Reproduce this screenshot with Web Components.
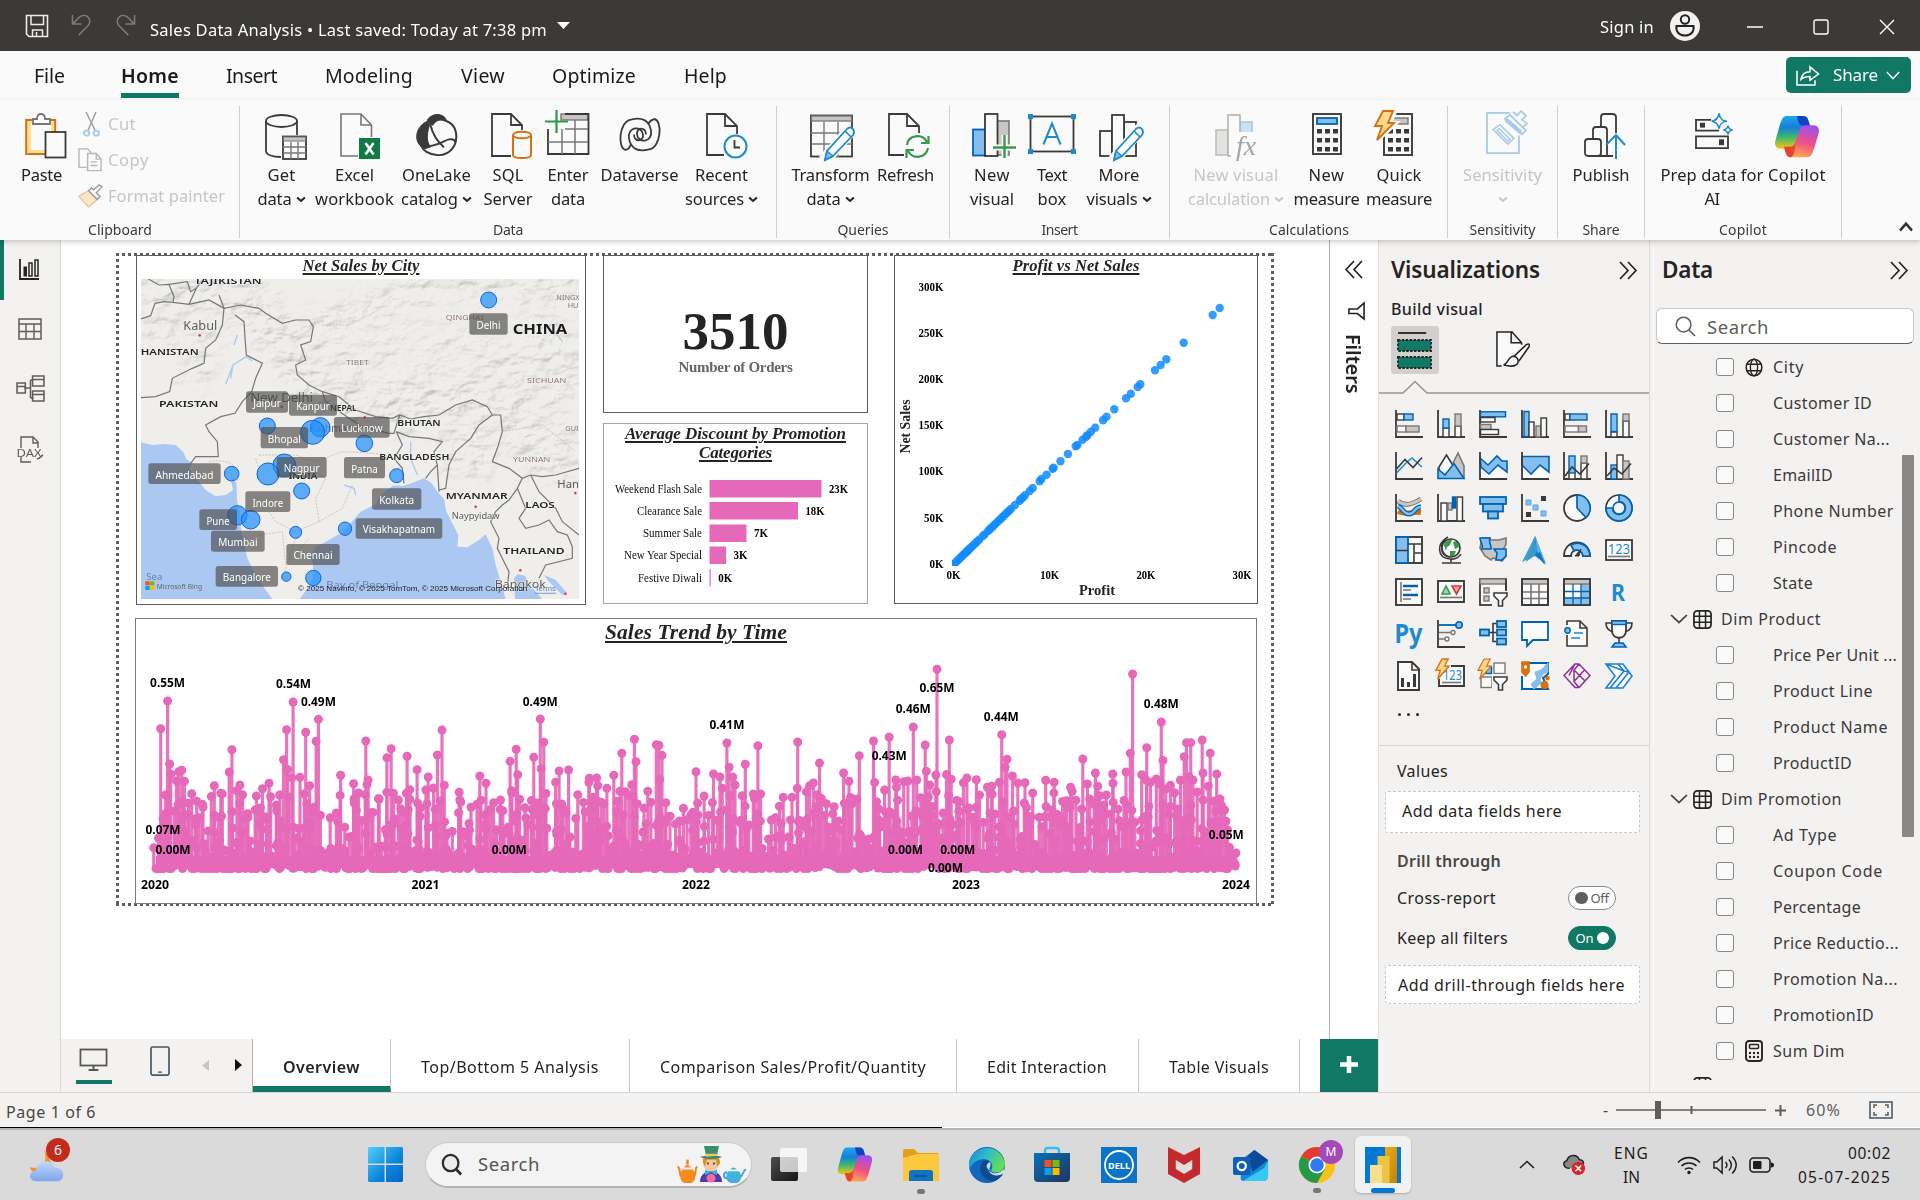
<!DOCTYPE html>
<html lang="en">
<head>
<meta charset="utf-8">
<title>Sales Data Analysis</title>
<style>
html,body{margin:0;padding:0;width:1920px;height:1200px;overflow:hidden;background:#fff}
body{font-family:"Noto Sans","Open Sans",sans-serif;color:#252423}
</style>
</head>
<body>
<bi-desktop></bi-desktop>
<script>
const K='#3b3a39',B='#0063b1',LB='#83beec',G='#797775',LG='#c8c6c4',W='#fafafa',BL='#1e8bcd',OR='#d86f10',GN='#379a4b',TEAL='#117865';
const R=(x,y,w,h,f='none',s=K,sw=1.4)=>`<rect x="${x}" y="${y}" width="${w}" height="${h}" fill="${f}" stroke="${s}" stroke-width="${sw}"/>`;
const P=(d,s=K,f='none',sw=1.6)=>`<path d="${d}" stroke="${s}" fill="${f}" stroke-width="${sw}"/>`;
const C=(x,y,r,f='none',s=K,sw=1.4)=>`<circle cx="${x}" cy="${y}" r="${r}" fill="${f}" stroke="${s}" stroke-width="${sw}"/>`;
const AX=P('M1 0V27H28',K,'none',1.8);
const ST=(x,y,t,o={})=>`<text x="${x}" y="${y}" font-size="${o.s||12}" text-anchor="${o.a||'middle'}" dominant-baseline="central" fill="${o.f||'#000'}" font-weight="${o.b||400}" font-family='${o.ff||'"Noto Sans",sans-serif'}' ${o.w?`textLength="${o.w}" lengthAdjust="spacingAndGlyphs"`:''} ${o.x||''}>${t}</text>`;
const PENCIL=P('M29 52L31 43 51 21 Q54 18 57 21 Q59 24 57 27L37 48Z',BL,'#fff',1.8)+P('M29 52L31 43 37 48Z',BL,'#83beec',1.5)+P('M49 23L55 29',BL);
const LOOP=`<defs><linearGradient id="ca" x1="0" y1="0" x2="0" y2="1"><stop offset="0" stop-color="#1ea7f0"/><stop offset=".35" stop-color="#1380d8"/><stop offset=".65" stop-color="#3fb86c"/><stop offset="1" stop-color="#f6c80e"/></linearGradient><linearGradient id="cb" x1=".6" y1="0" x2=".3" y2="1"><stop offset="0" stop-color="#a050ea"/><stop offset=".5" stop-color="#ee4f87"/><stop offset="1" stop-color="#fdae50"/></linearGradient></defs>
<path d="M13 2H29C33 2 34 5 35 9L36 13H32C28 13 27 16 26 19L22 33C21 37 18 37 15 37H7C1 37 0 32 2 26L6 11C8 5 9 2 13 2Z" fill="url(#ca)"/><path d="M23 2H29C33 2 34 5 35 9L36 13H31C27 13 25 11 24 7Z" fill="#1143c4"/><path d="M33 46H17C13 46 12 43 11 39L10 35H15C20 35 21 31 22 28L26 16C27 12 30 12 33 12H39C45 12 46 17 44 23L40 37C38 43 37 46 33 46Z" fill="url(#cb)"/><path d="M10 35H15C20 35 21 33 22 29L20 41C19 45 18 46 16 46 13 46 12 43 11 39Z" fill="#e8452c"/>`;
const BOLT=P('M8 0H15L11 8H16L3 23 6 13H1Z',OR,'#fcd98a',1.4);
const FUN=P('M15 15H28V18L23.500 22.500V28H19.500V22.500L15 18Z',K,W,1.6);

/* name : [viewBox, markup] */
const ICONS={
 save:['0 0 24 24',P('M1.500 1.500H22.500V22.500H4L1.500 20Z','#ececec','none',1.6)+P('M6 2V10.500H18.500V2M7.500 22V16H17.500V22M11.500 18V22','#ececec','none',1.5)],
 undo:['0 0 22 24',P('M1.500 1V10.500H11M2 10L8 4C16 -3 24 7 17 13L8 22','#7d7b79','none',1.6)],
 redo:['0 0 22 24',P('M20.500 1V10.500H11M20 10L14 4C6 -3 -2 7 5 13L14 22','#7d7b79','none',1.6)],
 caret:['0 0 12 7','<path d="M0 0H12L6 7Z" fill="#fff"/>'],
 user:['0 0 30 30',C(15,15,15,'#f3f2f1','none',0)+C(15,8.500,4.2,'none','#222',2)+P('M6.500 15H23.500C24.500 21 20.500 24.500 15 24.500S5.500 21 6.500 15Z','#222','none',2)],
 min:['0 0 16 16',P('M0 8H16','#fff','none',1.5)],
 max:['0 0 16 16','<rect x="1" y="1" width="14" height="14" rx="2" fill="none" stroke="#fff" stroke-width="1.4"/>'],
 close:['0 0 16 16',P('M1 1L15 15M15 1L1 15','#fff','none',1.4)],
 share:['0 0 24 22',P('M1 6V21H19V16M5 15C6 9 10 7 14 7V2L22.500 9.500 14 16V12C10 12 7 13 5 15Z','#fff','none',1.5)],
 chev:['0 0 16 10',P('M1 1L8 8.500 15 1','currentColor','none',1.7)],
 chevUp:['0 0 14 8',P('M1 7.500L7 1.500 13 7.500','currentColor','none',2.4)],
 trayUp:['0 0 16 9',P('M1 8L8 1.500 15 8','#222','none',1.6)],
 sm:['0 0 9 7',P('M1 1.500L4.500 5 8 1.500','currentColor','none',1.8)],
 paste:['0 0 42 46',R(1.200,7,29,34,'#fcdf97',OR,2)+R(6,10,20,27,W,'none',0)+P('M8 6H12C12 2 14 1 16 1S20 2 20 6H25V11H8Z',G,W,1.8)+R(20.500,19,20,25.500,W,K,1.8)],
 cut:['0 0 17 26',P('M3 0L12 19M13 0L5 19','#a19f9d','none',1.5)+C(3.500,22,2.700,'none','#a3cbe6',1.8)+C(13.300,22,2.700,'none','#a3cbe6',1.8)],
 copy:['0 0 26 26',P('M9 21H1V1H10L13 4V6','#bab8b6','none',1.5)+P('M10 6H19L24 12V24.500H10ZM19 6V12H24M13 15H20M13 19H20','#bab8b6',W,1.5)],
 brush:['0 0 26 24',P('M11 6L20 15 11 23 1 12Z','#efc49a','#fbe7c8',1.5)+P('M11 6L20 15 23 12 19 8 25 2 22 0 16 5 14 3Z','#a19f9d',W,1.5)],
 getdata:['0 0 42 46',`<ellipse cx="16.500" cy="7" rx="15.500" ry="6" fill="none" stroke="${K}" stroke-width="1.8"/>`+P('M1 7V37C1 41 8 43 16 43M32 7V21',K,'none',1.8)+R(18,22.500,23,22.500,W,K,1.8)+R(18.500,23,22,4,LG,G,1)+P('M18 33H41M18 39H41M26 28V45M33 28V45',G,'none',1.4)],
 excel:['0 0 40 46',P('M18 43H1V1H21L31.500 12V24M21 1V12H31.500',G,'none',1.6)+'<rect x="19" y="25" width="21" height="21" fill="#107c41"/>'+P('M25.500 30L33.500 41.500M33.500 30L25.500 41.500','#fff','none',2.6)],
 onelake:['0 0 42 44',`<path d="M11 6C16 -2 28 -2 31 7 25 4 20 7 17 12 13 10 11 9 11 6Z" fill="${K}"/><path d="M11 7C-3 15 -3 31 9 36L15 34C10 27 12 18 14 11Z" fill="${K}"/>`+P('M15 9C23 2 38 7 40 19 42 32 34 43 21 42 12 41 7 37 5 32M14 10C17 22 22 29 28 34M6 34C23 33 28 27 33 26S40 28 39 30',K,'none',2)],
 sql:['0 0 41 46',P('M20 43H1V1H20L31 12V17M20 1V12H31',K,'none',1.8)+P('M22 22V42C22 46 40 46 40 42V22',OR,W,2)+`<ellipse cx="31" cy="22" rx="9" ry="3.300" fill="${W}" stroke="${OR}" stroke-width="2"/>`],
 enter:['0 0 44 46',R(16,4,27,6,LG,G,1.4)+P('M20 4H43.500V44H3V19',K,'none',1.8)+P('M3 32H43M20 19H43M17 19V44M30 10V44',G,'none',1.5)+P('M0 11.500H23M11.500 0V23','#2e9a4b','none',2.2)],
 dataverse:['0 0 42 32',P('M7 31C-2 30 0 3 12 1.500 23 -1 30 2 32 12 34 24 19 25 18 16 17 9 27 8 27 16M35 1C44 2 42 29 30 30.500 19 33 12 30 10 20 8 8 23 7 24 16 25 23 15 24 15 16M7 31C11 30 11 27 12 25M35 1C31 2 30 4 29 6',K,'none',1.8)],
 recent:['0 0 41 46',P('M18 42H1V1H19L31 13V21M19 1V13H31',K,'none',1.8)+C(29.500,33.500,11,W,BL,2)+P('M28.500 27V34.500H34',K,'none',1.8)],
 transform:['0 0 46 46',R(1,1.500,41,41,W,K,1.8)+R(1.500,2,40,5,LG,G,1.3)+P('M1 19H42M1 30H42M14 8V43M28 8V43',G,'none',1.4)+`<g transform="translate(-14 -6)"><path d="M28 53L56 20" stroke="#fafafa" stroke-width="13"/>${PENCIL}</g>`],
 refresh:['0 0 42 46',P('M16 42H1V1H19L31 13V20M19 1V13H31',K,'none',1.8)+P('M19 32C20 22 34 20 39 29M40.500 23V30H33M40 35C38 45 25 47 20 38M18.500 45V37H26',GN,'none',2.2)],
 newvisual:['0 0 44 46',R(1,16.500,12,26,LB,B,1.8)+R(25,8,12,34,LG,G,1.6)+R(13,1,12.500,42,W,K,1.8)+P('M21 34.500H44M32.500 22V46',W,'none',6)+P('M21 34.500H44M32.500 22V45','#379a4b','none',2.4)],
 textbox:['0 0 48 40',R(2.500,2.500,43,35,W,K,1.8)+[[0,0],[43,0],[0,35],[43,35]].map(a=>`<rect x="${a[0]}" y="${a[1]}" width="5" height="5" fill="${BL}"/>`).join('')+P('M15.500 30.500L24 9.500 32.500 30.500M18.500 23H29.500',BL,'none',2)],
 morevisuals:['0 0 46 46',R(1,17,12,25,W,K,1.8)+R(25,8,12,34,W,K,1.8)+R(13,1,12,41,W,K,1.8)+`<g transform="translate(-14 -6)"><path d="M28 53L56 20" stroke="#fafafa" stroke-width="12"/>${PENCIL}</g>`],
 newcalc:['0 0 44 46','<g>'+R(1,16,12,25,'#e3e2e1','#c0bfbd',1.6)+R(25,8,12,18,'#cbe2f3','#a9cbe3',1.6)+R(13,1,12,41,W,'#b5b3b1',1.6)+'<path d="M24 18H44V46H16V34H24Z" fill="#fafafa"/>'+ST(31,31,'fx',{s:28,ff:'"Liberation Serif"',f:'#a7a5a3',x:'font-style="italic"'})+'</g>'],
 measure:['0 0 30 42',R(1,1,28,40,W,K,1.9)+R(5,5,20,6,LB,B,1.8)+[0,1,2].map(r=>[0,1,2].map(c=>`<rect x="${5+c*8}" y="${16+r*9}" width="5" height="4.500" fill="${K}"/>`).join('')).join('')],
 quick:['0 0 40 46',`<g transform="translate(9 3)">`+R(1,1,28,41,W,K,1.9)+R(5,5,20,6,LG,G,1.4)+[0,1,2].map(r=>[0,1,2].map(c=>`<rect x="${5+c*8}" y="${16+r*9}" width="5" height="4.500" fill="${K}"/>`).join('')).join('')+'</g>'+P('M8 0H22L16 13H22L2 32 7 17H0Z',W,W,4)+P('M9 1H19L14 13H20L3 30 8 16H1Z',OR,'#fcd98a',1.9)],
 sens:['0 0 42 46',P('M24 3H1V44H33V26','#a3cbe6','none',1.7)+P('M7 20L14 15 28 29 22 35ZM11 21L13 19 24 30 22 32Z','#a3cbe6','none',1.5)+P('M19 9L24 5 40 21 36 25ZM19 9L33 22M27 2L31 6 35 1 40 6 36 10 41 14 36 18','#a3cbe6',W,1.7)+P('M20 10L35 23','#a3cbe6','none',4)],
 publish:['0 0 42 46',`<rect x="1" y="26" width="16" height="17" rx="3" fill="none" stroke="${K}" stroke-width="1.8"/>`+P('M9 26V17Q9 14 12 14H20Q23 14 23 17V43H14M17 14V4Q17 1 20 1H28Q32 1 32 4V20M23 43H29',K,'none',1.8)+P('M32 46V22M22 32L32 22 41 32',BL,'none',2)],
 prep:['0 0 38 38',P('M16 7H1V18H24M1 24H33V36H1Z',K,'none',1.8)+'<rect x="5" y="10" width="5" height="5" fill="#3b3a39"/><rect x="24" y="27" width="5" height="6" fill="#3b3a39"/>'+P('M24 0.500C25 6 27 8 32 8.500 27 9 25 11 24 16 23 11 21 9 16.500 8.500 21 8 23 6 24 0.500ZM33 13C33.500 16 35 17 37.500 17.500 35 18 33.500 19 33 22 32.500 19 31 18 28.500 17.500 31 17 32.500 16 33 13Z',BL,W,1.6)],
 copilot:['0 0 46 48',LOOP],
 report:['0 0 24 24',P('M2 2V22H21','#252423','none',1.8)+R(6,10,2.500,9,'#252423','#252423',1)+R(11,6,3,13,'none','#252423',1.5)+R(17,3,3,16,'none','#252423',1.5)],
 table:['0 0 24 22',R(1,1,22,20,'none','#605e5c',1.5)+P('M1 6H23M1 13.500H23M8 6V21M16 6V21','#605e5c','none',1.4)],
 model:['0 0 28 28',P('M8 13H14M14 5V23M14 5H17M14 23H17','#605e5c','none',1.5)+R(1,8,8,10,'none','#605e5c',1.5)+R(16,1,11,10,'none','#605e5c',1.5)+R(16,16,11,10,'none','#605e5c',1.5)+P('M16 4.500H27M16 19.500H27M1 11.500H9','#605e5c','none',1.5)],
 dax:['0 0 28 28',P('M5 12V1H17L22 6V12M17 1V7H22M5 21V26H15','#605e5c','none',1.4)+ST(13,17,'DAX',{s:10.500,f:'#605e5c',w:25})+P('M21 23C25 22 25 20 27 19','#605e5c','none',1.4)],
 dl:['0 0 20 20',P('M10 1L2 10 10 19M18 1L10 10 18 19','currentColor','none',1.7)],
 dr:['0 0 20 20',P('M2 1L10 10 2 19M10 1L18 10 10 19','currentColor','none',1.7)],
 funnel:['0 0 18 18',P('M17 1V17L10 11.500H1V7H10Z','#252423','none',1.7)],
 build:['0 0 38 38',P('M1 2H30','#252423','none',1.8)+`<rect x="1" y="9" width="34" height="11" fill="${TEAL}" stroke="#252423" stroke-width="1.800" stroke-dasharray="2.500 1.500"/><rect x="1" y="26" width="34" height="11" fill="${TEAL}" stroke="#252423" stroke-width="1.800" stroke-dasharray="2.500 1.500"/>`],
 format:['0 0 38 38',P('M6 36H1V1H17L27 12V14M16 1V12H27','#252423',W,1.6)+P('M19 26L32 14 Q36 12 35 16L24 31','#252423',W,1.6)+P('M8 35C13 34 12 26 19 26 26 28 25 37 14 36Z','#252423',W,1.6)],
 search:['0 0 22 22',C(9,9,7.700,'none','currentColor',1.6)+P('M14.500 14.500L21 21','currentColor','none',1.7)],
 globe:['0 0 20 20',C(10,10,8.700,'none','#252423',1.7)+'<ellipse cx="10" cy="10" rx="4" ry="8.700" fill="none" stroke="#252423" stroke-width="1.500"/>'+P('M2 6.500H18M2 13.500H18','#252423','none',1.5)],
 dim:['0 0 20 20','<rect x="1" y="1" width="18" height="18" rx="3.500" fill="none" stroke="#252423" stroke-width="1.800"/>'+P('M1 6.500H19M1 13H19M6.800 1V19M13.200 1V19','#252423','none',1.6)],
 calc:['0 0 18 22','<rect x="1" y="1" width="16" height="20" rx="3" fill="none" stroke="#252423" stroke-width="1.900"/><rect x="4.500" y="4.500" width="9" height="4" rx="1" fill="none" stroke="#252423" stroke-width="1.500"/>'+[5,9,13].map(x=>C(x,13,1.200,'#252423','none',0)+C(x,17,1.200,'#252423','none',0)).join('')],
 desktop:['0 0 30 24',R(1.500,1.500,27,16,'none','#555',1.8)+P('M15 17V22M10 22H20','#555','none',2)],
 phone:['0 0 20 32','<rect x="1" y="1" width="18" height="29" rx="1.500" fill="none" stroke="#4a5866" stroke-width="1.700"/>'+P('M8 27H12','#555','none',1.4)],
 fit:['0 0 24 18',R(1,1,22,16,'none','#4d5b68',1.6)+P('M5 7V4H8M16 4H19V7M19 11V14H16M8 14H5V11','#605e5c','none',1.6)],
 /* taskbar */
 weather:['0 0 40 40','<defs><linearGradient id="wc" x1="0" y1="0" x2="0" y2="1"><stop offset="0" stop-color="#c2d8fb"/><stop offset="1" stop-color="#7fa5ec"/></linearGradient></defs><path d="M15 2C22 18 12 26 1 22 3 32 20 36 26 22Z" fill="#f0932a"/><path d="M8 37C-1 37 -1 26 7 26 9 16 23 11 27 23 38 22 39 37 30 37Z" fill="url(#wc)"/>'],
 start:['0 0 36 36','<defs><linearGradient id="st" x1="0" y1="0" x2="1" y2="1"><stop offset="0" stop-color="#4fd0fb"/><stop offset=".6" stop-color="#0c83d8"/><stop offset="1" stop-color="#0069c8"/></linearGradient></defs><path d="M1 0H17V17H0V1ZM18.500 0H35L36 1V17H18.500ZM0 18.500H17V36H1L0 35ZM18.500 18.500H36V35L35 36H18.500Z" fill="url(#st)"/>'],
 lens:['0 0 24 24',C(10.500,10.500,8.500,'#e8ecef','#2b2b2b',2.4)+P('M16.500 17L22 22.500','#2b2b2b','none',3)],
 hatter:['0 0 68 40','<path d="M4 25H15C19 31 17 38 13 39H7C2 38 1 31 4 25ZM6 23Q9.500 18 13 23Z" fill="#f58a1f"/><path d="M3 32C1 30 3 26 0 22M16 32C19 30 16 26 19 22" fill="none" stroke="#f1831f" stroke-width="2"/><path d="M9.500 15V20" stroke="#f1831f" stroke-width="2.500"/><path d="M50 27H61C65 32 63 38 59 39H53C48 38 47 32 50 27ZM52 25Q55.500 21 59 25Z" fill="#43b3de"/><path d="M62 33C66 31 64 27 68 25M49 34C45 34 45 28 49 28" fill="none" stroke="#3fa7d6" stroke-width="2"/><path d="M22 38C22 30 28 27 33 27S44 30 44 38Z" fill="#5437a8"/><circle cx="33" cy="19" r="8" fill="#f6c79b"/><path d="M25 18C24 11 28 12 33 13S42 10 42 19L39 22 38 15 29 15 27 22Z" fill="#df8e27"/><path d="M26 1H41L39 11 44 12C40 15 27 15 22 12L28 11Z" fill="#378f6b"/><path d="M27 9H39V11L28 12Z" fill="#f4c55b"/><path d="M30 18V20M36 18V20" stroke="#333" stroke-width="1.500"/><path d="M33 28L27 25V31ZM33 28L39 25V31Z" fill="#2bb5e8"/><circle cx="33" cy="34" r="4.500" fill="#f06aa4"/>'],
 taskview:['0 0 36 36','<defs><linearGradient id="tv" x1="0" y1="0" x2="1" y2="1"><stop offset="0" stop-color="#4c4c4c"/><stop offset="1" stop-color="#161616"/></linearGradient></defs><rect x="0" y="10" width="27" height="24" rx="2" fill="url(#tv)"/><rect x="9" y="1" width="27" height="24" rx="2" fill="#fff" opacity=".75"/>'],
 folder:['0 0 36 34','<path d="M0 3Q0 1 2 1H11L15 5H34Q36 5 36 8V31Q36 33 34 33H2Q0 33 0 31Z" fill="#e2a01b"/><path d="M0 10L14 6H36V31Q36 33 34 33H2Q0 33 0 31Z" fill="#fcc93c"/><path d="M6 33V25Q6 22 9 22H27Q30 22 30 25V33Z" fill="#1273c4"/><path d="M11 28H24" stroke="#0b4f93" stroke-width="1.500"/>'],
 edge:['0 0 36 36','<defs><linearGradient id="e1" x1="0" y1="0" x2="1" y2=".4"><stop offset="0" stop-color="#1b86d6"/><stop offset=".5" stop-color="#2bbccb"/><stop offset="1" stop-color="#62dc5a"/></linearGradient></defs><circle cx="18" cy="18" r="18" fill="#1167bd"/><path d="M0 16C2 -1 30 -7 36 16 36 26 26 27 22 24 25 19 23 13 15 12 8 12 2 17 0 23Z" fill="url(#e1)"/><path d="M14 14C8 22 12 34 26 34 30 32 33 29 34 27 28 30 18 28 17 20 17 16 20 15 21 15 19 13 16 13 14 14Z" fill="#124a92"/><path d="M21 15C17 17 16 21 22 24 18 20 23 21 21 15Z" fill="#dadada"/><path d="M35 26C30 30 22 29 20 24 26 29 32 25 35 22Z" fill="#dadada"/>'],
 store:['0 0 36 36','<defs><linearGradient id="so" x1="0" y1="0" x2="1" y2="1"><stop offset="0" stop-color="#0a71b8"/><stop offset="1" stop-color="#20345f"/></linearGradient></defs><path d="M11 9V4Q11 1 14 1H22Q25 1 25 4V9" fill="none" stroke="#37bdf2" stroke-width="2.400"/><path d="M0 6H36V31Q36 35 32 35H4Q0 35 0 31Z" fill="url(#so)"/><rect x="10.500" y="13" width="7" height="7" fill="#f25022"/><rect x="18.500" y="13" width="7" height="7" fill="#7fba00"/><rect x="10.500" y="21" width="7" height="7" fill="#00a4ef"/><rect x="18.500" y="21" width="7" height="7" fill="#ffb900"/>'],
 dell:['0 0 36 36','<rect width="36" height="36" fill="#0b74c9"/>'+C(18,18,14,'none','#fff',1.8)+ST(18,18,'DELL',{s:9.500,f:'#fff',b:700,w:22})],
 mcafee:['0 0 34 36','<path d="M0 0L16.500 8 33 0V27L16.500 36 0 27Z" fill="#c42a2c"/><path d="M8 13L16.500 18 25 13V22L16.500 27 8 22Z" fill="#dedede"/>'],
 outlook:['0 0 38 34','<path d="M8 12L22 2 36 12V28Q36 33 31 33H11Q7 33 8 28Z" fill="#1687d9"/><path d="M15 8L22 2 36 12 20 24Z" fill="#0b4a99"/><path d="M36 13V28Q36 33 31 33H10L32 20Z" fill="#36c9f4"/><rect x="0" y="9" width="18" height="18" rx="2" fill="#0f5fb8"/>'+C(9,18,4.200,'none','#fff',2.3)],
 chrome:['0 0 36 36','<circle cx="18" cy="18" r="18" fill="#fbc116"/><path d="M18 18L2.400 9A18 18 0 0 1 33.600 9Z" fill="#e33b2e"/><path d="M18 18L2.400 9A18 18 0 0 0 18 36L26 22Z" fill="#279847"/><circle cx="18" cy="18" r="8.500" fill="#fff"/><circle cx="18" cy="18" r="6.800" fill="#3079ee"/>'],
 powerbi:['0 0 36 36','<defs><linearGradient id="pb" x1="0" y1="0" x2="1" y2="1"><stop offset="0" stop-color="#e9ad12"/><stop offset="1" stop-color="#c58208"/></linearGradient></defs><rect width="36" height="36" fill="#0078d4"/><rect x="20" y="0" width="12" height="36" fill="url(#pb)"/><rect x="12.500" y="9" width="12" height="27" fill="#ecc344"/><rect x="5" y="18" width="12" height="18" fill="#f8e08a"/>'],
 cloudx:['0 0 26 24','<path d="M8 16C1 16 0 9 5 8 7 1 16 1 18 7 22 7 23 10 22 12" fill="#888" stroke="#222" stroke-width="1.600"/><circle cx="17" cy="16" r="7" fill="#d1272d"/><path d="M14 13L20 19M20 13L14 19" stroke="#fff" stroke-width="1.600"/>'],
 wifi:['0 0 24 20',P('M1 7.500C7 1 17 1 23 7.500M4.500 11C8.500 7 15.500 7 19.500 11M8 14.500C10 12.500 14 12.500 16 14.500','#1c1c1c','none',1.6)+C(12,17.500,1.700,'#1c1c1c','none',0)],
 sound:['0 0 26 20',P('M1 7H4L9.500 2V18L4 13H1ZM13 7C15 9 15 11 13 13M16.500 4.500C20 8 20 12 16.500 15.500M20 1.500C25.500 7 25.500 13 20 18.500','#1c1c1c','none',1.5)],
 battery:['0 0 26 18','<rect x="1" y="2" width="20" height="14" rx="3.500" fill="none" stroke="#1c1c1c" stroke-width="1.600"/><rect x="4" y="5" width="8.500" height="8" rx="1" fill="#1c1c1c"/><path d="M22 6.500Q25 6.500 25 9T22 11.500Z" fill="#1c1c1c"/>'],
};
const VIZ=[
 AX+R(2,4,7,6,W,K)+R(9,4,9,6,LB,B)+R(2,16,9,6,W,G)+R(11,16,13,6,LG,G),
 AX+R(6,18,6,9,W,K)+R(6,9,6,9,LB,B)+R(18,16,6,11,W,K)+R(18,4,6,12,LG,G),
 AX+R(1.500,1.800,25,5,LB,B)+R(1.500,7.500,14.500,4.500,W,K)+R(1.500,14.500,10.500,5,LG,G)+R(1.500,19.500,18,5,W,K),
 AX+R(3,1.500,5,25,LB,B)+R(8,12,5,15,W,K)+R(15,16,5,11,LG,G)+R(20,8,5.500,19,W,K),
 AX+R(2,4,5,6,W,K)+R(7,4,17,6,LB,B)+R(2,16,13.500,6,W,G)+R(15.500,16,8,6,LG,G),
 AX+R(6,22,6,5,W,K)+R(6,4,6,17.500,LB,B)+R(18,11,6,16,W,K)+R(18,4,6,7,LG,G),
 AX+P('M1.500 21L12 10 17 6 27 15',BL)+P('M1.500 17L10 7.500 18 15.500 27 5.500'),
 P('M2 26V15L9.500 3 20 20',K,W)+P('M15 13L21 1 27 14V26.500',G,LG)+P('M1 26.500V17L8 23 17 11.500 27 26.500Z',B,LB),
 P('M1 26V14L9 22 19 13 27 20V26Z','none',W)+P('M1 6L9 13 18 4 23 9H28V20L19 13 10 22 2 15Z',B,LB)+AX,
 P('M1 26V14L9 22 19 13 27 20V26Z','none',W)+P('M1 4.500H28V20L19 13 10 22 1 13Z',B,LB)+AX,
 AX+R(6,20,6,7,W,K)+R(6,4,6,17,LB,B)+R(18,11,6,16,W,K)+R(18,4,6,7,LG,G)+P('M2 24L9 15 17 22 26 11.500'),
 AX+R(6,13,6,14,LB,B)+R(12,3,6,24,W,K)+R(18,9,6,18,LG,G)+P('M2 24L9 16 17 22 26 11.500'),
 P('M3 7C9 13 18 10 26 5',G,'none',5)+P('M3 7C9 13 18 10 26 5',LG,'none',3)+P('M3 17.500C10 22 18 17 26 18.500',OR,'none',5)+P('M3 12C8 14 8 20 14 20S19 13 26 13',B,'none',5)+P('M3 12C8 14 8 20 14 20S19 13 26 13',LB,'none',2.400)+AX,
 AX+R(4,9,6,18,W,K)+R(11,9,4,7,LG,G)+R(15.500,3,3,11,B,B)+R(20,3,5.500,24,W,K),
 R(1,3,26,7,LB,B,1.8)+R(4,10,20,7.500,LB,B,1.8)+R(9,17.500,10,7,LB,B,1.8),
 AX+`<path d="M20 2H25V7H20ZM5 18H10V23H5Z" fill="${K}"/><path d="M5 6H10V11H5ZM12 11H17V16H12ZM20 17H25V22H20Z" fill="${LB}" stroke="#5da6de" stroke-width="1"/>`,
 C(14,14,13,W,K,1.8)+P('M14 14V1A13 13 0 0 1 23 23.500Z',B,LB,1.7),
 C(14,14,13,W,K,1.700)+P('M14 1A13 13 0 1 1 1 14H7.500A6.500 6.500 0 1 0 14 7.500Z',B,LB,1.700)+C(14,14,6,'#f3f2f1',B,1.6),
 R(1,1,26,26,W,K,1.9)+R(1,1,12,26,LB,B,1.8)+P('M1 14.500H13M13 8H27M19 8V27M19 17H27',K),
 P('M11 1C-1 8 0 22 13 23 19 24 23 20 24 18M10 4C2 8 3 20 13 21M14 23V26M5 27H24')+C(14,12,9,W,K,1.7)+`<path d="M7 9C9 3 13 4 15 4L13 9 10 11 9 15ZM16 6C20 4 22 8 22 11L18 13ZM13 15L19 15 17 20 13 20Z" fill="${GN}"/>`,
 P('M3 2H10L12 4H20L27 2V8L24 14 27 20 23 25 14 22 12 24 6 20 1 12Z',G,LG)+P('M1 2H11C9 6 13 10 12 13H3C5 8 1 7 1 2Z',B,LB)+P('M15 13H27V20L23 24 17 24 18 17Z',B,LB),
 '<path d="M14 0L1 26 14 20Z" fill="#3f9fd0"/><path d="M14 0V20L25 28Z" fill="#1380d0"/><path d="M14 0L5 26 14 19 16 14 14 6Z" fill="#3d9ac6"/><path d="M14 -1L16 15 24 27Z" fill="#57b7e4"/><path d="M15 19L24 29 19 16Z" fill="#1071d0"/>',
 P('M1 20C1 2 27 2 27 20H20C20 12 8 12 8 20Z',K,W,1.8)+P('M8 9C13 6 26 6 27 20H20C19 14 13 13 11 15Z',B,LB,1.7)+P('M12 20L18 13 16 20Z',K,K,1),
 R(1,4,26,20,W,K,1.8)+ST(14,12.500,'123',{s:14,f:BL,w:22})+P('M3 20.500H25',G),
 R(1,1,26,26,W,K,1.9)+P('M6 4V24',G)+P('M8 8H23M8 17H23',B,'none',2.4)+P('M8 12H16M8 21H16',G),
 R(1,3,26,21,W,K,1.900)+P('M5 16L9 8 13 16Z',GN,'#a4d6ad')+P('M15 8H24L19.500 16Z','#d83b3b','#f5a7a7')+P('M3 19.500H25',G),
 R(1,1,26,26,W,K,1.8)+R(1,1,26,5,LG,G)+R(5,10,5,5,LG,G)+R(5,18,5,5,LG,G)+`<path d="M13 12H30V30H13Z" fill="#f3f2f1"/>`+FUN+P('M27 1V13',K,'none',1.8),
 R(1,1,26,26,W,K,1.8)+R(1,1,26,5,LG,G)+P('M2 14H26M2 20.500H26M10 6V26M18 6V26',G)+R(1,1,26,26,'none',K,1.8),
 R(1,1,26,26,W,K,1.8)+`<path d="M18 6H27V27H1V20H18Z" fill="${LB}"/>`+R(1,1,26,5,LG,G)+P('M2 13.500H26M2 20H26M10 6V26M18 6V26',B,'none',1.300)+R(1,1,26,26,'none',K,1.8),
 ST(13,13.500,'R',{s:24,f:BL,b:700,w:14}),
 ST(13.500,13,'Py',{s:26,f:BL,b:700,w:28}),
 AX+P('M2 5H19',B,'none',1.8)+C(22,5,3.200,LB,B,1.6)+P('M2 12.500H14M2 19H8',G)+C(16,12.500,2,W,G)+C(10,19,2,W,G),
 P('M9 12.500H17M17 3.500H14V21.500H17')+R(1,9.500,9,6,LB,B,1.8)+R(18,1,9,6,LB,B,1.8)+R(18,9.500,9,6,LB,B,1.8)+R(18,18.500,9,6,LB,B,1.8),
 P('M1 2H27V20H12L6 26V20H1Z',B,W,1.8),
 P('M4 5V1H17L24 8V26H4V15M17 1V8H24',K,W)+C(4.500,10.500,2.700,LB,B)+P('M11 13H20M8 18H17',BL),
 P('M7 1H21V11C21 20 7 20 7 11Z',K,W,1.8)+P('M7 3H1C1 9 4 11 8 12M21 3H27C27 9 24 11 20 12M14 18V23')+R(7,1,14,3.500,LB,B)+P('M10 23H18L21 27H7Z',B,LB),
 P('M3 0H17L24 7V28H3Z',K,W,1.9)+P('M17 0V8H24')+`<path d="M6 16H9V25H6ZM12 20H15V25H12ZM18 12H21V25H18Z" fill="${K}"/>`,
 P('M14 4H27V24H2V17',K,W,1.9)+ST(15.500,12.500,'123',{s:14,f:BL,w:19})+P('M5 20.500H24',G)+`<g transform="translate(-2 -3) scale(.88)">${P('M8 0H15L11 8H16L3 23 6 13H1Z',OR,'#fcd98a',1.500)}</g>`,
 R(15,1,11,10.500,W,G)+R(2,15,11,10.500,W,G)+R(7,5,5.500,6.500,LB,B)+`<path d="M13 12H30V30H13Z" fill="#f3f2f1"/>`+FUN+`<g transform="translate(-2 -3) scale(.88)">${BOLT}</g>`,
 P('M8 1H27V12L22 16 27 27H1V14',B,W,2)+P('M27 1V10L22 12 19 17 20 21 13 27 10 22 16 17 14 10 20 8Z',LB,LB,1)+P('M1 0H8V10L4.500 14 1 10Z',OR,OR)+C(4.500,5,1.700,W,'none',0)+C(23.500,23,4,OR,'none',0)+C(26.500,16,2.300,OR,'none',0),
 P('M12 2L1 13.500 12 25.500H16L27 13.500 16 2ZM16 2L11 8 22 19M21.500 8L11 19.500 16 25.500M12 2L6 13.500M11 8L11 19.500','#8f2f9d','none',1.500),
 P('M1 2H18L27 14 18 26H1L10 14ZM13 2L19 9 5 26M19 9L24 10 11 26M1 2L19 9','#1b80dc','#fff',1.600),
];

class FitLabel extends HTMLElement{
 connectedCallback(){
  if(this.shadowRoot)return;
  const s=this.attachShadow({mode:'open'});
  s.innerHTML='<style>:host{display:inline-block;white-space:nowrap;line-height:1.25;flex:none}:host([u]){text-decoration:underline;text-decoration-thickness:1.500px;text-underline-offset:2px;line-height:inherit;vertical-align:top}</style><slot></slot>';
  this.style.fontSize=(this.getAttribute('size')||16.500)+'px';
  const w=+this.getAttribute('w');
  if(w){const n=this.textContent.length,nat=this.getBoundingClientRect().width;if(nat){const ls=(w-nat)/n;this.style.letterSpacing=ls.toFixed(3)+'px';this.style.width=w+'px';}}
 }
}
customElements.define('fit-label',FitLabel);
const T=(t,w,size=16.500,css='')=>`<fit-label w="${w}" size="${size}" style="${css}">${t}</fit-label>`;
const TU=(t,w,size)=>`<fit-label u w="${w}" size="${size}">${t}</fit-label>`;

class UiIcon extends HTMLElement{
 connectedCallback(){
  if(this.shadowRoot)return;
  const n=this.getAttribute('name'),w=this.getAttribute('w'),h=this.getAttribute('h');
  const [vb,m]=n==='viz'?['0 0 28 28',VIZ[+this.getAttribute('i')]]:ICONS[n];
  this.attachShadow({mode:'open'}).innerHTML=`<style>:host{display:block;flex:none;width:${w}px;height:${h}px}svg{display:block;overflow:visible}</style><svg width="${w}" height="${h}" viewBox="${vb}" preserveAspectRatio="none">${m}</svg>`;
 }
}
customElements.define('ui-icon',UiIcon);
const I=(n,w,h,css='')=>`<ui-icon name="${n}" w="${w}" h="${h}" style="${css}"></ui-icon>`;

/* lays items [x, width, markup] in a flex row that starts at x0 */
const row=(x0,items)=>{let e=x0;return items.map(([x,w,h,css=''])=>{const m=x-e;e=x+w;return `<div style="flex:none;box-sizing:border-box;width:${w}px;margin-left:${m.toFixed(1)}px;${css}">${h}</div>`}).join('')};
const def=(name,css,html)=>customElements.define(name,class extends HTMLElement{
 connectedCallback(){if(this.shadowRoot)return;const s=this.attachShadow({mode:'open'});s.innerHTML=`<style>*{box-sizing:border-box}${css}</style>`+(typeof html==='function'?html(this):html)}
});

def('title-bar',':host{display:flex;height:51px;background:#3b3a37;color:#fff;align-items:center}',
 ()=>row(0,[[25,24,I('save',24,24),'padding-bottom:0'],[71,21,I('undo',21,23)],[115,21,I('redo',21,23)],[150,397,T('Sales Data Analysis • Last saved: Today at 7:38 pm',397,16.500),'padding-top:8px'],[557,13,I('caret',13,7)],[1600,54,T('Sign in',54,16.500),'padding-top:2px'],[1670,30,I('user',30,30)],[1747,16,I('min',16,16),'padding-top:2px'],[1813,16,I('max',16,16),'padding-top:3px'],[1879,16,I('close',16,16),'padding-top:3px']]));

const tabs=[['File',34,31],['Home',121,58],['Insert',226,51],['Modeling',325,88],['View',461,44],['Optimize',552,84],['Help',684,43]];
def('ribbon-tabs',':host{display:flex;height:49px;background:#fafafa;color:#1b1a19}.t{height:47px;display:flex;align-items:center;padding-top:8px;border-bottom:5px solid transparent}.on{font-weight:600;border-color:#117865}.share{margin:6px 9px 0 auto;width:125px;height:36px;background:#117865;color:#fff;border-radius:5px;display:flex;align-items:center;padding:0 11px 0 10px}',
 ()=>row(0,tabs.map((t,i)=>[t[1],t[2],`<div class="t ${i==1?'on':''}">${T(t[0],t[2],19.500)}</div>`]))+`<div class="share">${I('share',24,21)}<span style="width:13px"></span>${T('Share',45,17)}<span style="flex:1"></span>${I('chev',14,9)}</div>`);

/* ribbon button: icon box, then one or two caption lines */
def('ribbon-button',':host{display:flex;flex-direction:column;align-items:center}.i{height:57px;display:flex;align-items:flex-start;justify-content:center}.l{height:24px;display:flex;align-items:center;gap:4px;justify-content:center}:host([dim]) .l{color:#c8c6c4}',
 h=>{const g=a=>h.getAttribute(a);const c=I('sm',10,7);const [iw,ih,it]=g('box').split(',').map(Number);const dx=+g('dx');
 return `<div class="i" style="padding-top:${it+3}px;${dx>0?`padding-left:${dx*2}px`:`padding-right:${-dx*2}px`}">${I(g('icon'),iw,ih)}</div><div class="l">${T(g('a'),+g('aw'))}</div><div class="l">${g('b')?T(g('b'),+g('bw')):''}${h.hasAttribute('menu')?c:''}</div>`});
const RB=(c,dx,icon,box,a,aw,b,bw,fl='')=>({c,h:`<ribbon-button icon="${icon}" dx="${dx}" box="${box}" a="${a}" aw="${aw}" ${b?`b="${b}" bw="${bw}"`:''} ${fl}></ribbon-button>`});
const groups=[
 {x:240,e:777,n:'Data',nw:30,nc:508,it:[RB(281.500,4,'getdata','42,46,5','Get',28,'data',34,'menu'),RB(354.500,5,'excel','40,46,4','Excel',39,'workbook',79),RB(436.500,.5,'onelake','42,43,5','OneLake',69,'catalog',57,'menu'),RB(508,3.500,'sql','41,46,4','SQL',31,'Server',49),RB(568,-1.500,'enter','44,46,1','Enter',41,'data',34),RB(639.500,.5,'dataverse','42,33,9','Dataverse',78),RB(721.500,5,'recent','41,46,4','Recent',53,'sources',59,'menu')]},
 {x:777,e:950,n:'Queries',nw:51,nc:863,it:[RB(830.500,2,'transform','46,46,5','Transform',78,'data',34,'menu'),RB(905.500,3,'refresh','42,46,4','Refresh',57)]},
 {x:950,e:1170,n:'Insert',nw:36,nc:1059.500,it:[RB(992,2,'newvisual','44,46,4','New',36,'visual',44),RB(1052,0,'textbox','48,40,5','Text',30,'box',29),RB(1119,3,'morevisuals','46,46,5','More',41,'visuals',51,'menu')]},
 {x:1170,e:1448,n:'Calculations',nw:80,nc:1309,it:[RB(1236,.5,'newcalc','44,46,5','New visual',85,'calculation',82,'menu dim'),RB(1326.500,0,'measure','30,42,4','New',36,'measure',66),RB(1399,-5,'quick','40,46,1','Quick',45,'measure',66)]},
 {x:1448,e:1558,n:'Sensitivity',nw:66,nc:1502.500,it:[RB(1502.500,4,'sens','42,45,1','Sensitivity',79,'',0,'menu dim')]},
 {x:1558,e:1645,n:'Share',nw:37,nc:1601,it:[RB(1601,4,'publish','42,46,4','Publish',57)]},
 {x:1645,e:1842,n:'Copilot',nw:48,nc:1743,it:[RB(1712,2,'prep','38,37,4','Prep data for',103,'AI',15),RB(1797,0,'copilot','46,45,5','Copilot',58)]},
];
def('ribbon-group',':host{display:flex;flex-direction:column;height:132px;border-right:1px solid #d0cecc;flex:none}.r{display:flex;height:108px}.n{height:24px;display:flex;align-items:center;padding-top:7px}',
 h=>{const g=groups[+h.getAttribute('i')];return `<div class="r">${row(g.x,g.it.map(b=>[b.c-28,56,b.h]))}</div><div class="n" style="padding-left:${g.nc-g.nw/2-g.x}px;color:#3b3a39">${T(g.n,g.nw,14)}</div>`});
def('clipboard-group',':host{display:flex;flex-direction:column;height:132px;width:240px;border-right:1px solid #d0cecc;flex:none}.r{display:flex;height:108px}.p{width:62px;margin-left:21px;padding-top:7px}.l{height:24px;display:flex;align-items:center;margin-top:4px}.s{display:flex;flex-direction:column;color:#c8c6c4}.s div{height:36px;display:flex;align-items:center}.n{height:24px;display:flex;align-items:center;padding:7px 0 0 88px;color:#3b3a39}',
 ()=>`<div class="r"><div class="p">${I('paste',42,46,'margin-left:4px')}<div class="l">${T('Paste',41)}</div></div><div class="s"><div>${I('cut',17,25,'margin:0 8px 0 0')}${T('Cut',28)}</div><div>${I('copy',25,24,'margin:0 5px 0 -5px')}${T('Copy',41)}</div><div>${I('brush',25,23,'margin:0 5px 0 -5px')}${T('Format painter',117)}</div></div></div><div class="n">${T('Clipboard',64,14)}</div>`);
def('ribbon-bar',':host{display:flex;height:140px;background:#fafafa;padding-top:6px;position:relative;z-index:2;box-shadow:0 2px 5px rgba(0,0,0,.2)}.c{margin:116px 7px 0 auto;color:#333}',
 ()=>`<clipboard-group></clipboard-group>${groups.map((g,i)=>`<ribbon-group i="${i}" style="width:${g.e-g.x}px"></ribbon-group>`).join('')}<div class="c">${I('chevUp',14,9)}</div>`);

def('nav-rail',':host{display:flex;flex-direction:column;width:61px;flex:none;background:#f3f2f1;border-right:1px solid #dcdad8}div{height:60px;display:flex;align-items:center;justify-content:center}.on{border-left:4px solid #117865;padding-right:4px}',
 ()=>`<div class="on" style="padding-bottom:2px">${I('report',24,24)}</div><div style="padding-bottom:3px">${I('table',24,22)}</div><div style="padding-bottom:2px">${I('model',29,28)}</div><div>${I('dax',28,28)}</div>`);

/* bordered report visual with an optional underlined title */
def('visual-card',':host{display:block;border:1.5px solid #5c5c5c;background:#fff;overflow:hidden}.t{text-align:center;font:italic 700 17px/19px "Liberation Serif",serif;color:#252423}',
 h=>`<div class="t" style="${h.getAttribute('tcss')||''}"><slot name="title"></slot></div><slot></slot>`);

const SF='"Liberation Serif",serif';
const cities=[['Delhi',1139,165,24,1081,205,115,64],['Jaipur',475,543,24,411,439,126,64],['Kanpur',634,547,29,540,449,144,63],['Lucknow',611,562,36,675,516,167,62],['Bhopal',475,543,0,455,546,142,64],['Patna',766,595,25,705,636,123,64],['Nagpur',526,661,34,503,636,150,62],['Ahmedabad',368,686,22,118,655,217,62],['Indore',477,687,33,409,739,135,62],['Kolkata',863,692,21,789,730,148,64],['Pune',385,811,29,271,793,113,62],['Mumbai',425,824,28,306,857,161,63],['Visakhapatnam',708,851,20,740,820,260,61],['Chennai',560,862,18,532,897,160,63],['Bangalore',532,995,14,320,963,187,62],['',578,738,24],['',613,999,23]];
def('city-map',':host{display:block;width:438px;height:320px}svg{display:block}',()=>{
 const m=(x,y,t,s,w,f='#222',b=600)=>ST(x,y,t,{s,w,f,b,x:'stroke="#f4f3f1" stroke-width="3" paint-order="stroke"'});
 const bd=d=>P(d,'#77777a','none',3.6);
 const pts=cities.map(c=>c[3]?`<circle cx="${c[1]}" cy="${c[2]}" r="${c[3]}" fill="#2391fb" fill-opacity=".72" stroke="#1464d8" stroke-width="3"/>`:'').join('');
 const lb=cities.map(c=>c[0]?`<rect x="${c[4]}" y="${c[5]}" width="${c[6]}" height="${c[7]}" rx="8" fill="#4a4a4a" fill-opacity=".65"/>`+ST(c[4]+c[6]/2,c[5]+c[7]/2+1,c[0],{s:33,w:c[6]-43,f:'#fff'}):'').join('');
 return `<svg width="438" height="320" viewBox="96 102 1314 960" preserveAspectRatio="none">
 <defs><filter id="rel" x="0" y="0" width="1" height="1"><feTurbulence type="fractalNoise" baseFrequency=".016 .026" numOctaves="5" seed="8"/><feDiffuseLighting surfaceScale="16" lighting-color="#fff" diffuseConstant="1.150"><feDistantLight azimuth="225" elevation="58"/></feDiffuseLighting></filter>
 <filter id="bl"><feGaussianBlur stdDeviation="26"/></filter>
 <mask id="mt"><g filter="url(#bl)" fill="none" stroke="#fff"><path d="M96 130L330 110 450 190 560 330 620 430 760 480 900 500 1060 440 1160 500" stroke-width="130"/><path d="M100 250L300 260 250 430M600 250L760 180 1000 130 1400 120" stroke-width="90" stroke="#bbb"/><path d="M1150 300L1200 480 1300 620 1410 640M1080 550L1070 700M1290 200L1400 480" stroke-width="160" stroke="#ccc"/><path d="M640 340L1150 330" stroke-width="200" stroke="#888"/></g></mask></defs>
 <rect x="96" y="102" width="1314" height="960" fill="#efeeeb"/>
 <rect x="96" y="102" width="1314" height="960" filter="url(#rel)" mask="url(#mt)" opacity=".5" style="mix-blend-mode:multiply"/>
 <path d="M96 592L130 600 165 597 200 600 222 620 232 642 250 655 240 670 262 700 290 735 320 754 350 750 372 735 366 705 372 695 383 722 384 765 392 800 397 860 415 940 440 990 470 1035 490 1062H96ZM572 1062L596 1030 612 1000 612 960 605 930 622 905 660 885 700 862 722 838 755 800 800 778 815 752 850 722 885 722 915 712 945 700 968 715 985 740 1005 762 1012 800 1030 835 1048 870 1045 905 1075 907 1110 885 1130 868 1150 910 1160 960 1175 1010 1190 1062ZM1218 1062L1215 1000 1226 988 1248 992 1262 1020 1300 1062ZM1305 990L1340 1005 1375 1045 1360 1050 1320 1010Z" fill="#abc8f3"/>
 <path d="M350 418L372 360 412 335 430 348M372 360L365 400M385 270L375 300M706 720L735 730 740 750M1330 250L1360 290M905 590L905 640 925 690" stroke="#abc8f3" stroke-width="4" fill="none"/>
 ${bd('M96 222L125 212 138 175 165 170 192 172 195 155 180 118 150 120 118 102M192 172L240 178 262 130 282 102M240 178L300 165 345 190 395 180 450 190 470 205 520 235 560 225 600 225 613 245 605 290 575 300 590 345 560 360 565 390 600 420 640 440 690 455 740 495 800 515 850 520 872 510 905 522 945 515 990 510 1040 480 1090 465 1135 485 1150 510 1175 510 1180 560 1165 610 1150 650 1200 670 1240 700 1265 690 1300 695 1340 690 1410 670')}
 ${bd('M345 190L340 240 320 285 290 310 285 355 250 370 190 400 182 440 140 455 96 458M378 210L405 230 408 280 412 330 460 355 440 400 428 440 400 470 378 505 335 515 290 540 300 560 325 590 328 635 260 635 245 655M640 440L650 470 720 520 760 545 840 565 855 565 872 510M862 560L900 575 960 580 1000 590 975 620 985 660 990 740M862 560L880 600 855 640 880 670 885 715M985 660L965 680 950 700M1150 510L1110 540 1085 580 1040 620 1020 660 1010 730 990 735M1240 700L1225 730 1200 765 1180 780 1160 800 1145 830 1170 880 1165 910 1185 950 1200 980 1195 1030M1225 730L1250 790 1230 820 1250 850 1290 840 1320 825 1345 860 1375 870 1390 905 1390 940 1310 960 1290 1000M1265 690L1290 740 1340 790 1360 830 1410 870M180 118L235 110 245 140 262 130M330 150L345 190')}
 <path d="M450 630H560L620 650 700 620 800 625 860 640M440 640L455 690M600 670L650 700 620 760 630 830 560 860 500 830 480 800M630 830L700 790 730 720M450 870L520 860 530 960 600 880M560 880L520 1000M300 650C360 640 400 660 380 720M640 240L720 240 800 200 850 150M1180 560L1300 540 1400 620" stroke="#bdbcb9" stroke-width="2.500" stroke-dasharray="6 4" fill="none"/>
 ${m(357,109,'TAJIKISTAN',26,202)}${m(182,318,'HANISTAN',28,174)}${m(239,474,'PAKISTAN',28,178)}${m(1293,253,'CHINA',40,164,'#1c1c1c',700)}${m(703,489,'NEPAL',26,80)}${m(930,533,'BHUTAN',26,130)}${m(916,635,'BANGLADESH',26,210)}${m(1103,750,'MYANMAR',28,186)}${m(1293,777,'LAOS',28,88)}${m(1275,917,'THAILAND',29,184)}${m(582,690,'INDIA',24,86)}
 ${m(274,240,'Kabul',36,102,'#5b5b5b',400)}${m(518,456,'New Delhi',36,188,'#5b5b5b',400)}${m(685,549,'Kathmandu',30,170,'#5b5b5b',400)}${m(1100,811,'Naypyidaw',29,144,'#5b5b5b',400)}${m(1234,1015,'Bangkok',34,154,'#5b5b5b',400)}${ST(1345,716,'Hanoi',{s:34,f:'#5b5b5b',a:'start'})}
 ${m(1067,216,'QINGHAI',22,114,'#8b7379',400)}${m(745,351,'TIBET',22,68,'#8b7379',400)}${m(1313,405,'SICHUAN',22,118,'#8b7379',400)}${m(1268,642,'YUNNAN',23,112,'#8b7379',400)}${ST(1342,157,'NINGXIA',{s:22,f:'#8b7379',a:'start'})}${ST(1376,181,'HUI',{s:22,f:'#8b7379',a:'start'})}${ST(1369,548,'GUI',{s:22,f:'#8b7379',a:'start'})}
 ${ST(136,993,'Sea',{s:24,f:'#6883ad',w:48})}${ST(760,1018,'Bay of Bengal',{s:27,f:'#6883ad',w:216})}
 ${[[272,271],[518,485],[767,517],[1100,785],[1234,976],[1399,744],[1369,1046]].map(a=>C(a[0],a[1],4.500,'#d13b3b','#fff',1)).join('')}
 ${pts}${lb}
 <rect x="109" y="1009" width="13" height="12" fill="#f25022"/><rect x="123" y="1009" width="13" height="12" fill="#7fba00"/><rect x="109" y="1023" width="13" height="12" fill="#00a4ef"/><rect x="123" y="1023" width="13" height="12" fill="#ffb900"/>
 ${ST(211,1023,'Microsoft Bing',{s:22,f:'#666',w:136})}${ST(911,1030,'© 2025 NavInfo, © 2025 TomTom, © 2025 Microsoft Corporation',{s:24,f:'#222',w:688,ff:'"Liberation Sans"'})}${ST(1309,1030,'Terms',{s:23,f:'#5a7fd0',w:64,ff:'"Liberation Sans"',x:'text-decoration="underline"'})}
 </svg>`});

def('discount-bars',':host{display:block}svg{display:block}',()=>{
 const d=[['Weekend Flash Sale',87,482,112,'23K',19],['Clearance Sale',65,504,88.500,'18K',19],['Summer Sale',59,526.500,37,'7K',14],['New Year Special',78,548.500,16.500,'3K',14],['Festive Diwali',64,571,1.200,'0K',14]];
 return `<svg width="262" height="138" viewBox="605 464 262 138">${d.map(r=>`<rect x="710.500" y="${r[2]}" width="${r[3]}" height="17.500" fill="#e669b9"/>`+ST(703,r[2]+8.500,r[0],{s:12,w:r[1],a:'end',ff:SF,f:'#111'})+ST(710.500+r[3]+7.500,r[2]+8.500,r[4],{s:12,w:r[5],a:'start',ff:SF,b:700})).join('')}</svg>`});

def('profit-scatter',':host{display:block}svg{display:block}',()=>{
 const p=[[1452,189],[1436,210],[1369,293],[1329,343],[1316,360],[1303,376],[1269,418],[1263,426],[1247,446],[1236,460],[1209,493],[1191,515],[1183,526],[1165,548],[1155,560],[1147,571],[1144,575],[1136,584],[1124,600],[1120,604],[1102,627],[1085,649],[1069,668],[1067,671],[1053,689],[1041,702],[1037,709],[1021,729],[1014,738],[1003,751],[998,758],[994,762],[991,767],[980,780]];
 for(let x=971;x>836;x-=(x>930?4.500:x>880?4:3)){if(Math.abs(x-913)<3||Math.abs(x-901)<2)continue;p.push([x,780+(980-x)*1.258])}
 return `<svg width="361" height="328" viewBox="895 275 361 328"><clipPath id="cp"><rect x="952" y="275" width="310" height="291"/></clipPath><g fill="#118dff" fill-opacity=".86" clip-path="url(#cp)">${p.map(a=>`<circle cx="${(590+a[0]/2.306).toFixed(1)}" cy="${(245+a[1]/3).toFixed(1)}" r="4.200"/>`).join('')}</g>
 ${['300K','250K','200K','150K','100K','50K','0K'].map((t,i)=>ST(943.500,286.500+i*46.200,t,{s:12.500,b:700,a:'end',ff:SF,w:t.length>3?25:t.length>2?19.500:14})).join('')}
 ${['0K','10K','20K','30K'].map((t,i)=>ST(953.500+i*96.200,574.500,t,{s:12.500,b:700,ff:SF,w:i?19:14})).join('')}
 ${ST(1097,589.500,'Profit',{s:14.500,b:700,ff:SF,w:36,f:'#252423'})}${ST(0,0,'Net Sales',{s:14,b:700,ff:SF,w:54,f:'#252423',x:'transform="translate(905.500 426.500) rotate(-90)"'})}</svg>`});

def('sales-trend',':host{display:block}svg{display:block}',()=>{
 const a='91,716 109,359 127,276 122,558 135,495 150,515 156,488 164,484 171,517 182,583 203,577 218,586 249,530 266,553 288,489 295,422 316,528 308,545 249,619 268,622 336,614 359,561 375,539 392,523 370,597 412,605 420,558 430,452 438,362 455,279 473,505 488,370 498,530 515,397 521,331 505,608 552,626 568,612 579,499 590,655 613,524 615,582 626,552 645,396 651,513 648,527 678,569 700,446 711,419 700,550 719,629 736,599 753,442 751,553 760,542 756,602 779,482 780,582 787,622 808,504 802,543 822,537 832,438 844,363 850,529 854,680 889,550 893,579 916,663 920,595 943,501 959,523 946,574 964,610 979,581 997,573 1022,457 1026,545 1038,421 1042,497 1047,571 1061,596 1063,627 1084,445 1101,330 1110,400 1103,479 1093,582 1141,520 1150,486 1160,597 1175,483 1143,584 1199,557 1218,608 1229,508 1228,520 1248,507 1251,530 1240,565 1260,580 1275,538 1293,499 1300,607 1314,433 1309,547 1323,548 1340,527 1347,391 1351,458 1382,547 1372,597 1390,580 1404,407 1411,409 1419,439 1429,581 1440,622 1475,598 1465,636 1508,488 1512,582 1529,561 1500,610';
 const b='38,495 55,504 73,402 79,475 88,504 94,528 61,538 113,560 121,466 126,650 142,555 154,410 161,555 200,626 210,592 220,565 243,565 258,399 257,538 265,642 281,548 289,530 299,522 315,462 310,557 283,660 333,584 353,593 350,614 338,655 358,703 378,492 392,517 413,570 419,440 456,396 444,690 470,600 472,655 485,543 497,384 514,513 516,535 519,574 535,518 546,516 560,354 569,513 580,566 591,408 594,487 603,528 608,620 622,181 619,498 620,548 638,612 654,393 659,511 645,640 679,607 700,507 691,521 725,512 733,558 720,640 754,535 765,532 766,556 791,377 805,451 800,475 785,520 819,501 833,522 852,521 822,605 850,582 872,552 889,625 906,514 928,520 918,624 939,631 971,535 975,547 985,574 960,575 1003,450 1000,600 1015,525 1021,570 1036,492 1042,532 1047,560 1058,588 1081,495 1082,523 1095,600 1075,615 1116,489 1127,433 1133,195 1157,497 1158,632 1107,655 1170,416 1180,520 1195,510 1208,339 1205,525 1232,529 1243,551 1220,540 1258,513 1268,443 1274,401 1285,401 1291,513 1302,549 1315,393 1317,492 1336,433 1331,532 1353,495 1345,576 1360,635 1377,637 1386,715 1403,732 1401,765';
 const pg=(s,o)=>s.split(' ').map(q=>{const [x,y]=q.split(',');return [o+x/2.6133,610+y/3]});
 const pts=[...pg(a,120),...pg(b,700)];
 let sd=77;const rnd=()=>(sd=(sd*16807)%2147483647)/2147483647;
 const low=[];
 for(let x=157;x<1237;x+=1.9)low.push([x,872-Math.pow(rnd(),1.5)*14]);
 for(let x=158;x<1233;x+=2.800){const k=rnd();low.push([x+rnd()*2,859-k*k*60-rnd()*6])}
 for(const p of pts)if(p[1]<815&&rnd()<.85)low.push([p[0]+rnd()*6-3,p[1]+(870-p[1])*(.25+rnd()*.5)]);
 const all=[...pts,...low];
 const L=(cx,cy,t,o=120)=>ST((o+cx/2.6133).toFixed(1),610+cy/3,t,{s:12,b:700,w:35,ff:'"Noto Sans","Open Sans",sans-serif'});
 const Y=(cx,t,o=120)=>ST((o+cx/2.6133).toFixed(1),885.800,t,{s:12,b:700,w:28});
 return `<svg width="1118" height="257" viewBox="137 646 1118 257"><g stroke="#e669b9" stroke-width="3.200" stroke-opacity=".93">${all.map(p=>`<path d="M${p[0].toFixed(1)} ${p[1].toFixed(1)}V868"/>`).join('')}</g><rect x="157" y="857" width="1079" height="12" fill="#e669b9"/><g fill="#e669b9">${all.map(p=>`<circle cx="${p[0].toFixed(1)}" cy="${Math.min(p[1],869.500).toFixed(1)}" r="4.500"/>`).join('')}</g>
 ${L(127,221,'0.55M')}${L(456,224,'0.54M')}${L(521,276,'0.49M')}${L(1101,276,'0.49M')}${L(115,662,'0.07M')}${L(141,722,'0.00M')}${L(1020,722,'0.00M')}
 ${L(73,347,'0.41M',700)}${L(622,236,'0.65M',700)}${L(560,299,'0.46M',700)}${L(790,323,'0.44M',700)}${L(497,440,'0.43M',700)}${L(1208,284,'0.48M',700)}${L(1378,677,'0.05M',700)}${L(540,722,'0.00M',700)}${L(676,722,'0.00M',700)}${L(644,776,'0.00M',700)}
 ${Y(94,'2020')}${Y(801,'2021')}${Y(1508,'2022')}${Y(698,'2023',700)}${Y(1403,'2024',700)}</svg>`});

def('report-page',`:host{display:flex;flex-direction:column;width:1158px;height:653px;margin:13px 0 0 55px;padding:3px 0 0 20px;
 --h:repeating-linear-gradient(90deg,#605e5c 0 3px,transparent 3px 6px);--v:repeating-linear-gradient(#605e5c 0 3px,transparent 3px 6px);
 background:var(--h) 0 0/100% 3px no-repeat,var(--h) 0 100%/100% 3px no-repeat,var(--v) 0 0/3px 100% no-repeat,var(--v) 100% 0/3px 100% no-repeat}
 .top{display:flex;height:351px;flex:none}.mid{display:flex;flex-direction:column;width:265px;margin:0 26px 0 17px}
 .num{display:flex;flex-direction:column;align-items:center;font-family:"Liberation Serif",serif;font-weight:700;padding-top:49px;line-height:1}`,
 ()=>`<div class="top"><visual-card style="width:450px;height:350px;margin-top:-1px"><fit-label u slot="title" w="117" size="16.500">Net Sales by City</fit-label><city-map style="margin:4px 0 0 4px"></city-map></visual-card>
 <div class="mid"><visual-card style="height:158px;margin-top:-1px"><div class="num"><div style="font-size:53px;color:#252423">3510</div><div style="color:#666">${T('Number of Orders',114,15)}</div></div></visual-card>
 <visual-card style="height:181px;margin-top:10px;border-color:#a6a6a6"><span slot="title">${TU('Average Discount by Promotion',221,17)}<br>${TU('Categories',73,17)}</span><discount-bars></discount-bars></visual-card></div>
 <visual-card style="width:364px;height:349px;margin-top:-1px"><fit-label u slot="title" w="127" size="16.500">Profit vs Net Sales</fit-label><profit-scatter></profit-scatter></visual-card></div>
 <visual-card style="width:1122px;height:286px;margin:11px 0 0 -1px;flex:none;border-color:#7a7a7a" tcss="line-height:26px"><fit-label u slot="title" w="182" size="21.500">Sales Trend by Time</fit-label><sales-trend></sales-trend></visual-card>`);

const ptabs=[['Overview',391,283,77],['Top/Bottom 5 Analysis',629.500,421,178],['Comparison Sales/Profit/Quantity',956.500,660,266],['Edit Interaction',1138.500,987,120],['Table Visuals',1299.500,1169,100]];
def('page-tabs',':host{display:flex;height:53px;background:#fff;flex:none}.v{display:flex;width:192px;background:#f3f2f1;border-right:1px solid #b3b0ad;align-items:flex-start}.t{display:flex;align-items:center;border-right:1px solid #c8c6c4;padding-top:2px}.on{font-weight:600;border-bottom:6px solid #117865;padding-top:8px}.add{width:58px;background:#117865;margin-left:auto;display:flex;align-items:center;justify-content:center;padding-bottom:2px}.m{border-bottom:4px solid #117865;height:45px;padding-top:9px}',
 ()=>{let e=253;return `<div class="v">${row(61,[[76,36,`<div class="m">${I('desktop',29,24,'margin-left:3px')}</div>`],[150,20,I('phone',20,31),'padding-top:7px'],[202,7,`<svg width="7" height="11" style="display:block;margin-top:21px"><path d="M7 0V11L0 5.500Z" fill="#c8c6c4"/></svg>`],[235,7,`<svg width="7" height="12" style="display:block;margin-top:20px"><path d="M0 0V12L7 6Z" fill="#111"/></svg>`]])}</div>`+ptabs.map((t,i)=>{const w=t[1]-e,p=t[2]-e;e=t[1];return `<div class="t ${i?'':'on'}" style="width:${w}px;padding-left:${p}px">${T(t[0],t[3],16)}</div>`}).join('')+`<div class="add"><svg width="18" height="17" style="display:block"><path d="M9 0V17M0 8.500H18" stroke="#fff" stroke-width="4.500"/></svg></div>`});

def('filters-pane',':host{display:flex;flex-direction:column;width:49px;flex:none;border-left:1px solid #b3b0ad;background:#fff;align-items:center}.v{writing-mode:vertical-rl;font-weight:600;height:66px;width:26px;display:flex;justify-content:center;font-size:20px;line-height:26px;letter-spacing:-.15px;margin-right:2px}',
 ()=>`<div style="padding:20px 0 0 0">${I('dl',20,19)}</div><div style="padding:23px 0 11px 5px">${I('funnel',17,18)}</div><div class="v">Filters</div>`);

def('field-well',':host{display:flex;align-items:center;width:255px;background:#fff;border:1.5px dashed #c8c6c4;border-radius:3px}','<slot></slot>');
def('toggle-switch',':host{display:flex;align-items:center;width:48px;height:24px;border-radius:12px;border:1px solid #8a8886;background:#fff;color:#605e5c;padding:0 6px;gap:3px}:host([on]){background:#117865;border-color:#117865;color:#fff;flex-direction:row-reverse;padding:0 6px}i{width:12.500px;height:12.500px;border-radius:50%;background:#605e5c;flex:none}:host([on]) i{background:#fff}',
 h=>`<i></i>${T(h.hasAttribute('on')?'On':'Off',18,13)}`);

def('viz-pane',':host{display:flex;flex-direction:column;width:271px;flex:none;background:#f3f2f1;border-left:1px solid #e1dfdd}.h{display:flex;height:60px;align-items:center;font-weight:600}.k{display:flex}.g{display:grid;grid-template-columns:repeat(6,28px);gap:14px;padding:16px 0 0 16px}.sel{width:48px;height:48px;background:#d2d0ce;border-radius:3px;display:flex;align-items:center;justify-content:center}.r{display:flex;align-items:center;padding:0 33px 0 18px;justify-content:space-between;height:40px}',
 ()=>`<div class="h" style="padding:0 11px 0 12px;justify-content:space-between">${T('Visualizations',149,22.500)}${I('dr',20,19)}</div>
 <div style="padding:0 0 5px 12px;font-weight:500;display:flex;align-items:center;margin-top:-4px;height:30px">${T('Build visual',92,16)}</div>
 <div class="k" style="padding-left:12px"><div class="sel">${I('build',37,38)}</div><div style="padding:5px 0 0 57px">${I('format',36,37)}</div></div>
 <svg width="270" height="14" style="display:block;margin-top:6px;flex:none"><path d="M0 13H24L36 1.500 48 13H270" fill="none" stroke="#979593" stroke-width="1.500"/></svg>
 <div class="g">${VIZ.map((v,i)=>`<ui-icon name="viz" i="${i}" w="28" h="28"></ui-icon>`).join('')}</div>
 <div style="display:flex;gap:6px;padding:23px 0 0 19px;height:56px;border-bottom:1px solid #d8d6d4">${'<span style="width:3px;height:3px;border-radius:2px;background:#252423"></span>'.repeat(3)}</div>
 <div style="padding:14px 0 0 18px;height:45px">${T('Values',51,16)}</div>
 <field-well style="height:42px;margin-left:6px;padding:0 0 2px 16px">${T('Add data fields here',160,16)}</field-well>
 <div style="padding:17px 0 0 18px;height:45px;font-weight:600;color:#484644">${T('Drill through',104,16)}</div>
 <div class="r">${T('Cross-report',99,16)}<toggle-switch></toggle-switch></div><div class="r">${T('Keep all filters',111,16)}<toggle-switch on></toggle-switch></div>
 <field-well style="height:39px;margin:7px 0 0 6px;padding-left:12px">${T('Add drill-through fields here',227,16)}</field-well>`);

const fields=[['City',31,'globe'],['Customer ID',99],['Customer Na...',117],['EmailID',60],['Phone Number',121],['Pincode',64],['State',40],['>Dim Product',100],['Price Per Unit ...',124],['Product Line',100],['Product Name',115],['ProductID',79],['>Dim Promotion',121],['Ad Type',64],['Coupon Code',110],['Percentage',88],['Price Reductio...',126],['Promotion Na...',125],['PromotionID',101],['Sum Dim',72,'calc']];
def('field-row',':host{display:flex;align-items:center;height:36px;flex:none}.c{width:18px;height:18px;border:1px solid #8a8886;border-radius:3px;background:#fafafa;margin-left:66px;flex:none}.i{width:39px;display:flex;justify-content:center;flex:none}',
 h=>{const [n,w,ic]=fields[+h.getAttribute('i')];return n[0]==='>'?`${I('chev',18,10,'margin-left:20px;color:#444')}${I('dim',19,19,'margin:0 9px 0 5px')}${T(n.slice(1),w,16)}`:`<span class="c"></span><span class="i">${ic?I(ic,18,ic==='calc'?22:19):''}</span>${T(n,w,16)}`});
def('data-pane',':host{display:flex;flex-direction:column;width:271px;flex:none;background:#f3f2f1;border-left:1px solid #dcdad8}.h{display:flex;height:60px;align-items:center;justify-content:space-between;padding:0 11px 0 12px;font-weight:600}.s{display:flex;align-items:center;margin:8px 0 0 6px;width:258px;height:36px;background:#fff;border:1px solid #c8c6c4;border-bottom:1.500px solid #605e5c;border-radius:6px;padding:1px 0 0 18px;gap:11px;color:#605e5c}.b{display:flex;height:731px;margin-top:5px;overflow:hidden}.l{width:252px;color:#3b3a39}.sb{width:12px;height:382px;margin-top:106px;background:#8a8886}',
 ()=>`<div class="h">${T('Data',51,22.500)}${I('dr',20,19)}</div><div class="s">${I('search',21,21)}${T('Search',62,18.500)}</div><div class="b"><div class="l">${fields.map((f,i)=>`<field-row i="${i}"></field-row>`).join('')}<div style="padding:8px 0 0 43px">${I('dim',19,19)}</div></div><div class="sb"></div></div>`);

def('status-bar',':host{display:flex;height:35px;background:#f3f2f1;border-top:1px solid #d8d6d4;align-items:center;color:#484644;flex:none}',
 ()=>row(0,[[6,90,T('Page 1 of 6',90,16),'padding-top:4px'],[1603,8,'-'],[1616,150,`<svg width="150" height="18" style="display:block"><path d="M0 9H150" stroke="#605e5c" stroke-width="1.500"/><path d="M42 0V18" stroke="#605e5c" stroke-width="6"/><path d="M75.500 5V13" stroke="#605e5c" stroke-width="2"/></svg>`],[1775,11,`<svg width="11" height="11" style="display:block"><path d="M0 5.500H11M5.500 0V11" stroke="#605e5c" stroke-width="2"/></svg>`],[1806,35,T('60%',35,16,'color:#605e5c')],[1869,25,I('fit',24,18)]]));

def('task-bar',`:host{display:flex;height:72px;background:#dadada;border-top:2px solid #b4b4b4;flex:none;padding-top:0}.x>div{height:70px;display:flex;align-items:center}.x{display:flex}.pill{width:327px;height:46px;border-radius:23px;background:#f3f3f3;border:1.5px solid #c9c9c9;border-bottom:2px solid #b3b3b3;display:flex;align-items:center;padding:0 5px 0 15px;color:#555}.badge{position:absolute;border-radius:50%;color:#fff;display:flex;align-items:center;justify-content:center}.w{position:relative}.dot{position:absolute;width:8px;height:5px;border-radius:3px;background:#767676;left:14px;top:41px}.tile{width:56px;height:57px;border-radius:6px;background:#f1f1f1;box-shadow:0 1px 2px #aaa;display:flex;align-items:center;justify-content:center}`,
 ()=>`<div class="x">`+row(0,[[29,38,`<div class="w">${I('weather',38,38)}<span class="badge" style="left:17px;top:-8px;width:24px;height:24px;background:#c42b1c;font-size:14px">6</span></div>`],[368,35,I('start',35,35)],[425,327,`<div class="pill">${I('lens',22,23)}<span style="width:15px"></span>${T('Search',62,18.500)}<span style="flex:1"></span>${I('hatter',68,39)}</div>`],[771,36,I('taskview',36,36)],[837,37,I('copilot',36,37)],[903,37,`<div class="w">${I('folder',36,34)}<span class="dot"></span></div>`],[969,36,I('edge',36,36)],[1034,36,I('store',36,36)],[1101,36,I('dell',36,36)],[1168,33,I('mcafee',33,36)],[1233,37,I('outlook',37,34)],[1299,37,`<div class="w">${I('chrome',36,36)}<span class="dot"></span><span class="badge" style="left:20px;top:-7px;width:24px;height:24px;background:#a349b8;font-size:12px">M</span></div>`],[1355,56,`<div class="tile w">${I('powerbi',36,36)}<span class="dot" style="width:24px;height:5px;background:#0078d4;left:16px;top:52px"></span></div>`],[1519,16,I('trayUp',16,9)],[1562,25,I('cloudx',25,23)],[1614,36,`<div style="text-align:center;line-height:24px;color:#1c1c1c">${T('ENG',35,15.500)}<br>${T('IN',17,15.500)}</div>`],[1677,24,I('wifi',24,20)],[1713,25,I('sound',25,20)],[1749,26,I('battery',26,18)],[1797,94,`<div style="width:94px;text-align:right;line-height:24px;color:#1c1c1c">${T('00:02',43,15.500)}<br>${T('05-07-2025',93,15.500)}</div>`]].map(a=>[...a,'padding-bottom:1px']))+'</div>');

def('bi-desktop',':host{display:flex;flex-direction:column;width:1920px;height:1200px;background:#fff;overflow:hidden}.m{display:flex;height:852px;flex:none}.c{display:flex;flex-direction:column;width:1317px;flex:none}.u{display:flex;height:799px}.v{flex:1}.e{height:1px;flex:none;background:linear-gradient(90deg,#000 942px,#fff 942px)}',
 `<title-bar></title-bar><ribbon-tabs></ribbon-tabs><ribbon-bar></ribbon-bar>
 <div class="m"><nav-rail></nav-rail><div class="c"><div class="u"><div class="v"><report-page></report-page></div><filters-pane></filters-pane></div><page-tabs></page-tabs></div><viz-pane></viz-pane><data-pane></data-pane></div>
 <status-bar></status-bar><div class="e"></div><task-bar></task-bar>`);
</script>
</body>
</html>
